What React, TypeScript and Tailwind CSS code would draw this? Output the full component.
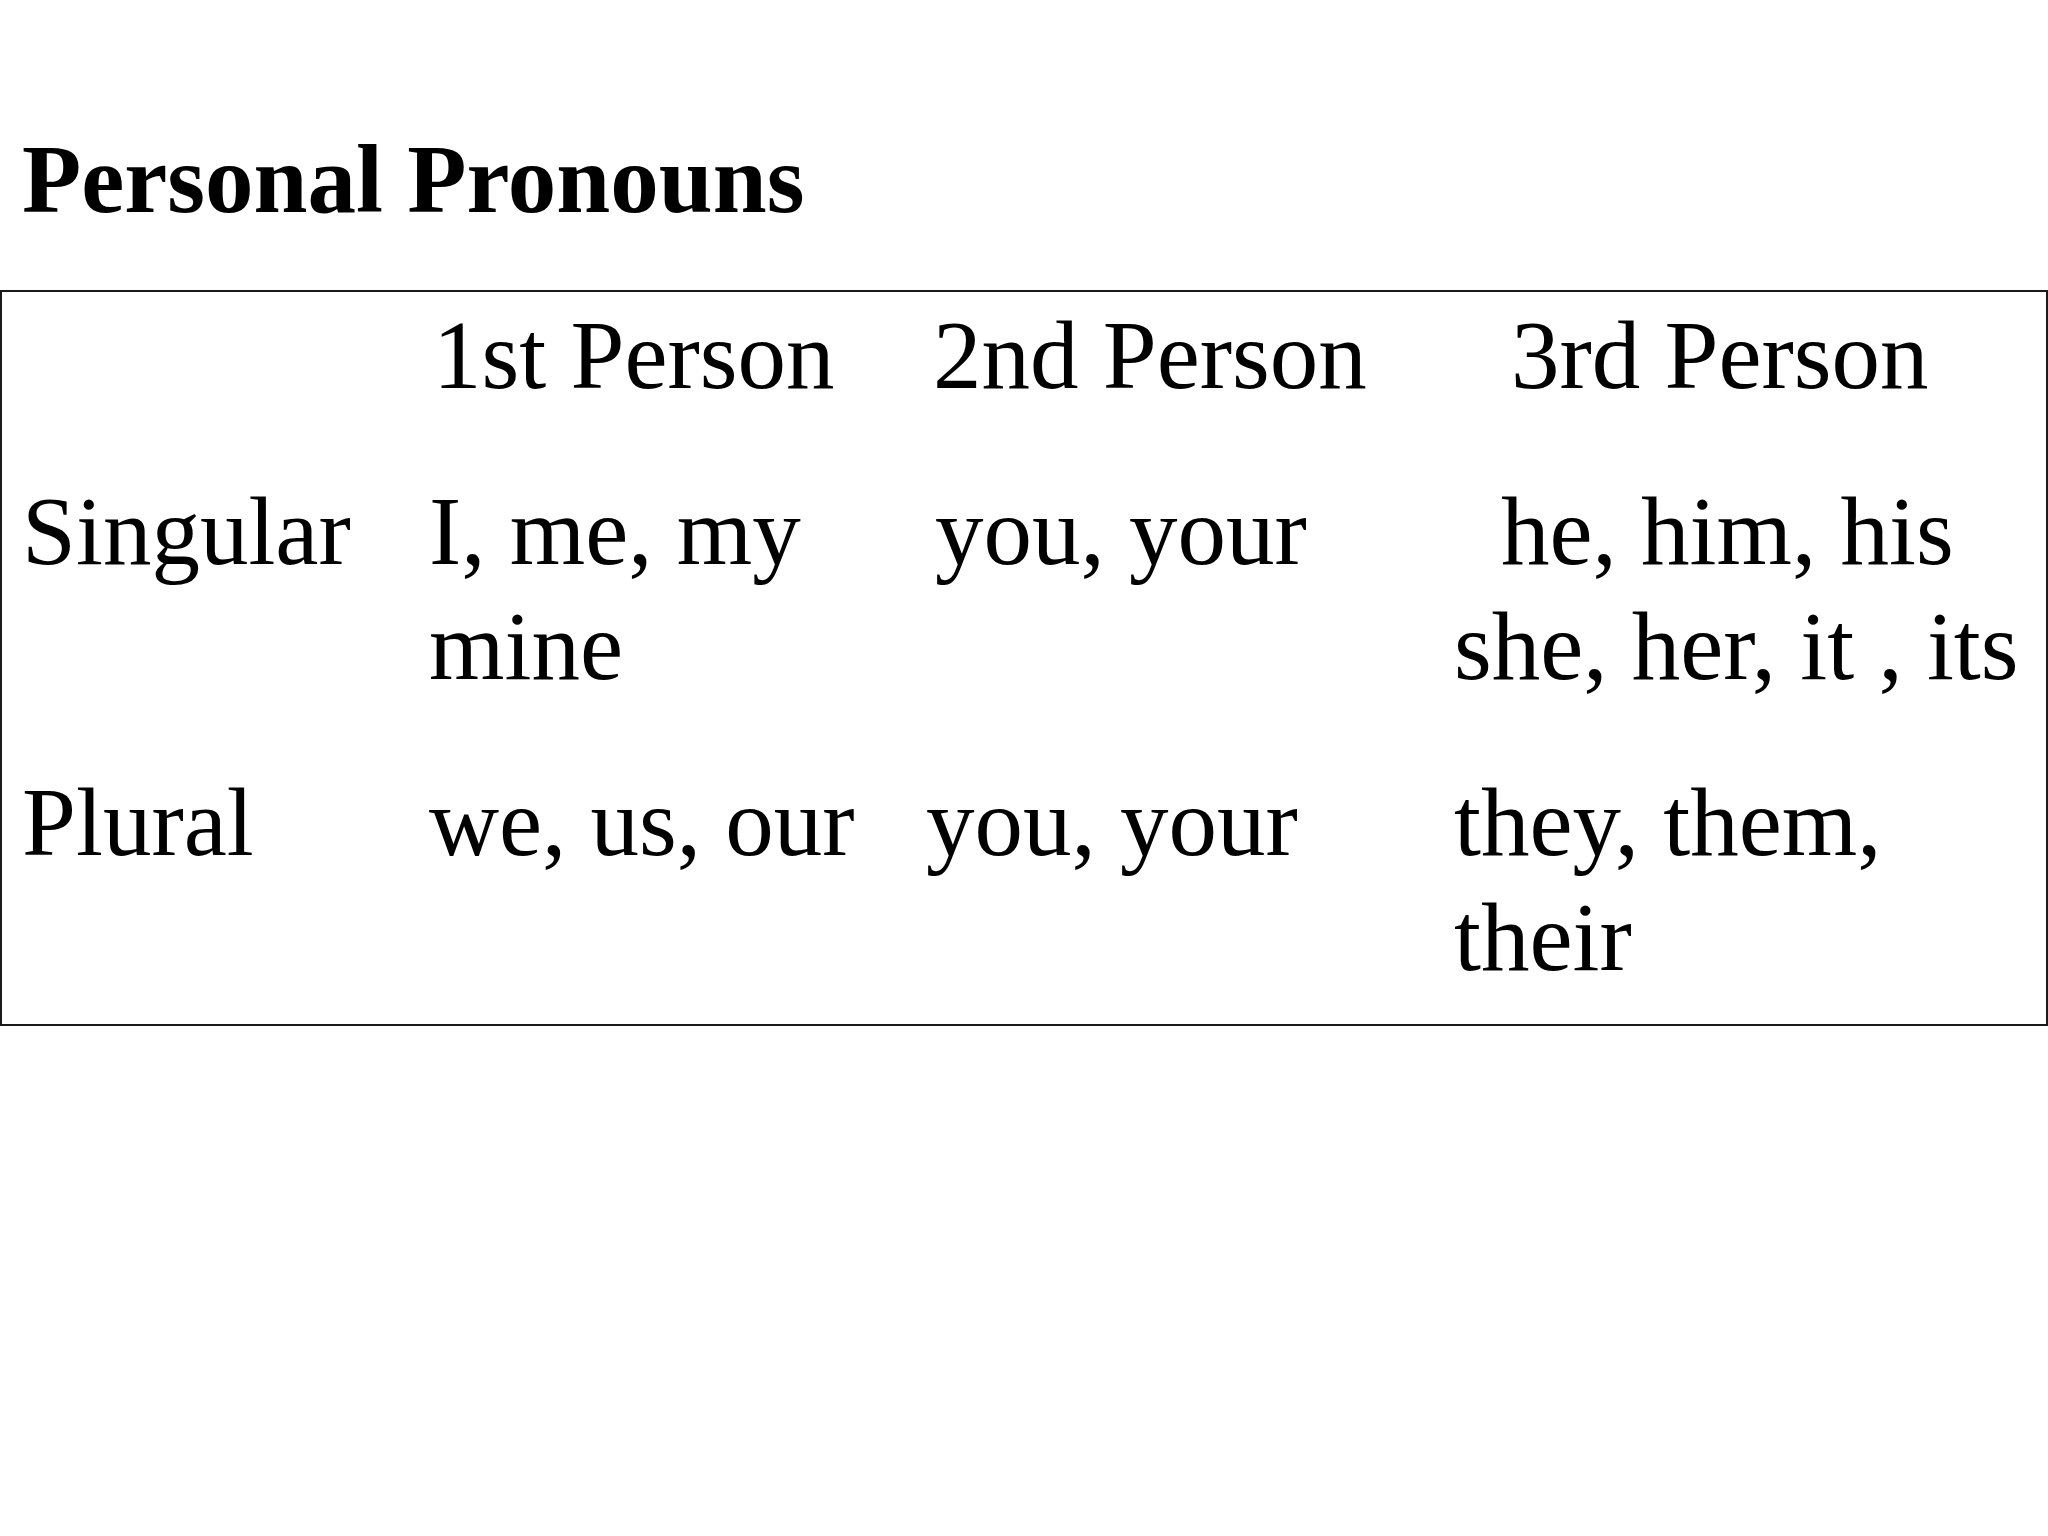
const rows: { label: string; first: string[]; second: string[]; third: string[]; secondPad: string; thirdPad: string[] }[] = [
  {
    label: "Singular",
    first: ["I, me, my", "mine"],
    second: ["you, your"],
    third: ["he, him, his", "she, her, it , its"],
    secondPad: "pl-[9px]",
    thirdPad: ["pl-[47px]", "pl-0"],
  },
  {
    label: "Plural",
    first: ["we, us, our"],
    second: ["you, your"],
    third: ["they, them,", "their"],
    secondPad: "pl-0",
    thirdPad: ["pl-0", "pl-0"],
  },
];

export default function App() {
  return (
    <div
      className="w-[2048px] h-[1536px] bg-white text-black pt-[122px]"
      style={{ fontFamily: '"Liberation Serif", "Times New Roman", serif' }}
    >
      <h1 className="pl-[22px] text-[97px] leading-[115px] font-bold">Personal Pronouns</h1>

      <div className="mt-[53px] border-2 border-[#1a1a1a] pt-[6px] pb-[29px]">
        <div className="grid grid-cols-[427px_497px_528px_1fr] gap-y-[61px] text-[97px] leading-[115px] whitespace-nowrap">
          {/* header row */}
          <div />
          <div className="pl-[4px]">1st Person</div>
          <div className="pl-[7px]">2nd Person</div>
          <div className="pl-[57px]">3rd Person</div>

          {rows.map((r) => (
            <div key={r.label} className="contents">
              <div className="pl-[20px]">{r.label}</div>
              <div>
                {r.first.map((t) => (
                  <div key={t}>{t}</div>
                ))}
              </div>
              <div className={r.secondPad}>
                {r.second.map((t) => (
                  <div key={t}>{t}</div>
                ))}
              </div>
              <div>
                {r.third.map((t, i) => (
                  <div key={t} className={r.thirdPad[i]}>
                    {t}
                  </div>
                ))}
              </div>
            </div>
          ))}
        </div>
      </div>
    </div>
  );
}
